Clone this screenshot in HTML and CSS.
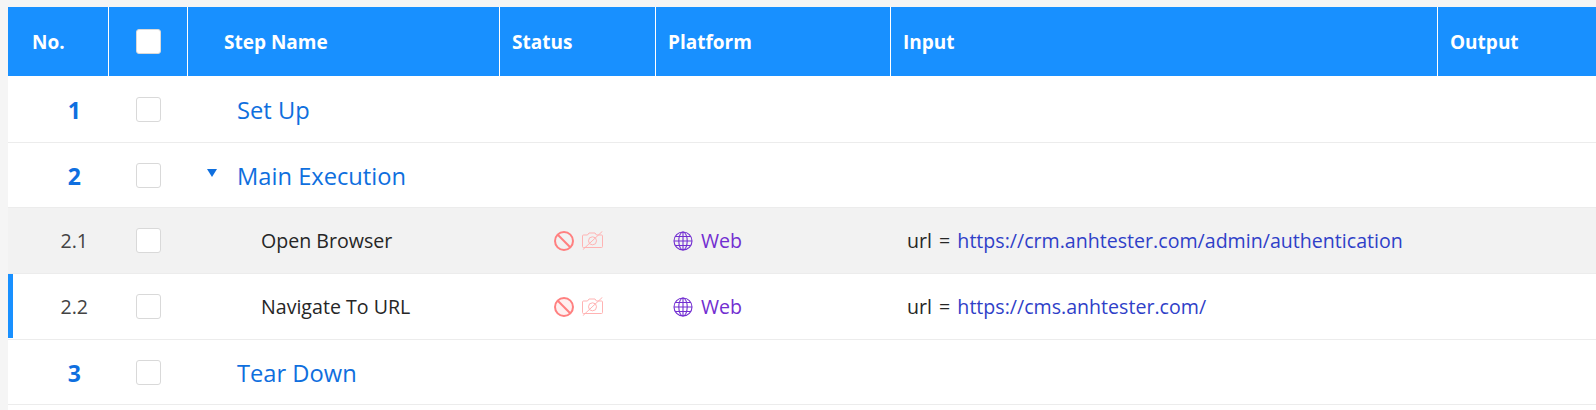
FILE: index.html
```html
<!DOCTYPE html>
<html lang="en">
<head>
<meta charset="utf-8">
<title>Steps</title>
<link rel="stylesheet" href="styles.css">
</head>
<body>
<main class="sheet">
<table class="steps">
  <colgroup>
    <col class="c-no"><col class="c-check"><col class="c-name"><col class="c-status"><col class="c-platform"><col class="c-input"><col class="c-output">
  </colgroup>
  <thead>
    <tr>
      <th class="th-no">No.</th>
      <th class="th-check"><span class="box box-head"></span></th>
      <th class="th-name">Step Name</th>
      <th>Status</th>
      <th>Platform</th>
      <th>Input</th>
      <th class="th-last">Output</th>
    </tr>
  </thead>
  <tbody>
    <tr class="group r-67">
      <td class="no">1</td>
      <td class="check"><span class="box"></span></td>
      <td class="name"><span class="title">Set Up</span></td>
      <td></td><td></td><td></td><td></td>
    </tr>
    <tr class="group r-65">
      <td class="no">2</td>
      <td class="check"><span class="box"></span></td>
      <td class="name"><span class="caret"></span><span class="title">Main Execution</span></td>
      <td></td><td></td><td></td><td></td>
    </tr>
    <tr class="step hovered r-66">
      <td class="no">2.1</td>
      <td class="check"><span class="box"></span></td>
      <td class="name">Open Browser</td>
      <td class="status">
        <span class="status-icons">
          <svg class="ic-ban" viewBox="0 0 20 20"><circle cx="10" cy="10" r="9"/><path d="M3.800 3.800l12.400 12.400"/></svg>
          <svg class="ic-cam" viewBox="0 0 21 19"><path d="M.5 5a1 1 0 0 1 1-1h4l1.500-2h6l1.500 2h5a1 1 0 0 1 1 1v10.500a1 1 0 0 1-1 1h-18a1 1 0 0 1-1-1z"/><circle cx="10.500" cy="9.800" r="4"/><path d="M.8 18.700L20.400.3"/></svg>
        </span>
      </td>
      <td class="platform">
        <span class="web">
          <svg class="ic-globe" viewBox="0 0 20 20"><circle cx="10" cy="10" r="9"/><ellipse cx="10" cy="10" rx="4.200" ry="9"/><path d="M10 1v18M1 10h18M2.300 5.500h15.400M2.300 14.500h15.400"/></svg>
          Web
        </span>
      </td>
      <td class="input">url = <a>https://crm.anhtester.com/admin/authentication</a></td>
      <td></td>
    </tr>
    <tr class="step active r-66">
      <td class="no">2.2</td>
      <td class="check"><span class="box"></span></td>
      <td class="name">Navigate To URL</td>
      <td class="status">
        <span class="status-icons">
          <svg class="ic-ban" viewBox="0 0 20 20"><circle cx="10" cy="10" r="9"/><path d="M3.800 3.800l12.400 12.400"/></svg>
          <svg class="ic-cam" viewBox="0 0 21 19"><path d="M.5 5a1 1 0 0 1 1-1h4l1.500-2h6l1.500 2h5a1 1 0 0 1 1 1v10.500a1 1 0 0 1-1 1h-18a1 1 0 0 1-1-1z"/><circle cx="10.500" cy="9.800" r="4"/><path d="M.8 18.700L20.400.3"/></svg>
        </span>
      </td>
      <td class="platform">
        <span class="web">
          <svg class="ic-globe" viewBox="0 0 20 20"><circle cx="10" cy="10" r="9"/><ellipse cx="10" cy="10" rx="4.200" ry="9"/><path d="M10 1v18M1 10h18M2.300 5.500h15.400M2.300 14.500h15.400"/></svg>
          Web
        </span>
      </td>
      <td class="input">url = <a>https://cms.anhtester.com/</a></td>
      <td></td>
    </tr>
    <tr class="group r-65">
      <td class="no">3</td>
      <td class="check"><span class="box"></span></td>
      <td class="name"><span class="title">Tear Down</span></td>
      <td></td><td></td><td></td><td></td>
    </tr>
  </tbody>
</table>
</main>
</body>
</html>
```

FILE: styles.css
```css
html, body { margin: 0; padding: 0; height: 100%; overflow: hidden; }
body {
  display: flex;
  flex-direction: column;
  box-sizing: border-box;
  background: #f5f5f5;
  padding: 7px 0 0 8px;
  font-family: "Open Sans", "Noto Sans", sans-serif;
  font-size: 19.6px;
  color: #262626;
}
.sheet { flex: 1; background: #fff; }
.steps {
  width: 1588px;
  border-collapse: separate;
  border-spacing: 0;
  table-layout: fixed;
}
.c-no { width: 101px; }
.c-check { width: 79px; }
.c-name { width: 312px; }
.c-status { width: 156px; }
.c-platform { width: 235px; }
.c-input { width: 547px; }
.steps th {
  height: 69px;
  padding: 0 0 0 12px;
  background: #1890ff;
  color: #fff;
  font-size: 19px;
  font-weight: 700;
  text-align: left;
  border-right: 1px solid #fff;
  box-sizing: border-box;
}
.steps th.th-last { border-right: 0; }
.steps th.th-no { padding-left: 24px; }
.steps th.th-check { padding-left: 27px; }
.steps th.th-name { padding-left: 36px; }
.box {
  display: block;
  width: 25px;
  height: 25px;
  box-sizing: border-box;
  background: #fff;
  border: 1px solid #d9d9d9;
  border-radius: 3px;
}
.steps td {
  padding: 0;
  border-bottom: 1px solid #ececec;
  box-sizing: border-box;
}
.r-65 td { height: 65px; }
.r-66 td { height: 66px; }
.r-67 td { height: 67px; }
.check { padding-left: 27px !important; }
.no { text-align: right; }
.group .no {
  padding-top: 2px !important;
  padding-right: 28px !important;
  color: #0f6fdf;
  font-size: 23px;
  font-weight: 700;
}
.step .no { padding-right: 21px !important; color: #434343; }
.name { white-space: nowrap; }
.group .name { padding-top: 2px !important; padding-left: 49px !important; position: relative; }
.title { color: #0f6fde; font-size: 23.7px; }
.caret {
  position: absolute;
  left: 19px;
  top: 26px;
  width: 0;
  height: 0;
  border-left: 5px solid transparent;
  border-right: 5px solid transparent;
  border-top: 8px solid #0f6fde;
}
.step .name { padding-left: 73px !important; }
.hovered td { background: #f2f2f2; }
.active td:first-child { position: relative; }
.active td:first-child::before {
  content: "";
  position: absolute;
  left: 0;
  top: 0;
  bottom: 1px;
  width: 5px;
  background: #1890ff;
}
.status { padding-left: 54px !important; }
.status-icons { display: flex; align-items: center; gap: 8px; }
.ic-ban { width: 20px; height: 20px; fill: #fff0f0; stroke: #ff8080; stroke-width: 2; }
.hovered .ic-ban { fill: none; }
.ic-cam { width: 21px; height: 19px; fill: none; stroke: #ffb3b3; stroke-width: 1; }
.platform { padding-left: 17px !important; }
.web { display: flex; align-items: center; gap: 8px; color: #722ed1; font-weight: 500; }
.ic-globe { width: 20px; height: 20px; fill: none; stroke: #722ed1; stroke-width: 1.100; flex: none; }
.input { padding-left: 16px !important; white-space: nowrap; word-spacing: 2px; }
.input a { color: #2f3fc8; }
```
